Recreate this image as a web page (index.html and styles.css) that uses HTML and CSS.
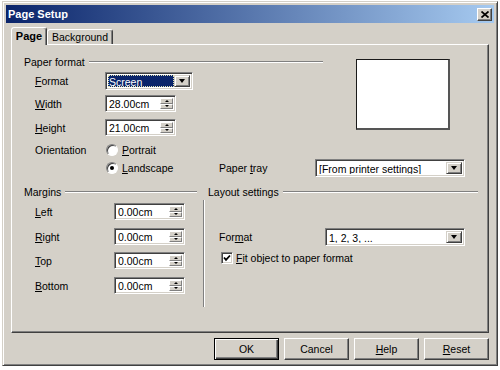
FILE: index.html
```html
<!DOCTYPE html>
<html>
<head>
<meta charset="utf-8">
<title>Page Setup</title>
<link rel="stylesheet" href="styles.css">
</head>
<body>
<div class="window">
  <div class="titlebar">
    <span class="title">Page Setup</span>
    <span class="close"><svg width="8" height="7" viewBox="0 0 8 7"><path d="M0.5 0.5 L7.5 6.5 M7.5 0.5 L0.5 6.5" stroke="#000" stroke-width="1.7" fill="none"/></svg></span>
  </div>
  <div class="tabs">
    <div class="tab tab-page">Page</div>
    <div class="tab tab-bg">Background</div>
  </div>
  <div class="panel">
    <div class="top">
      <div class="paper">
        <div class="ghead"><span>Paper format</span><i class="line"></i></div>
        <div class="row row-format">
          <span class="lab lab-70"><u>F</u>ormat</span>
          <div class="combo combo-screen">
            <div class="ctext focus">Screen</div>
            <div class="dbtn"><i class="darrow"></i></div>
          </div>
        </div>
        <div class="row row-width">
          <span class="lab lab-70"><u>W</u>idth</span>
          <div class="spin">
            <div class="stext">28.00cm</div>
            <div class="sbtns"><div class="sb"><i class="up"></i></div><div class="sb"><i class="dn"></i></div></div>
          </div>
        </div>
        <div class="row row-height">
          <span class="lab lab-70"><u>H</u>eight</span>
          <div class="spin">
            <div class="stext">21.00cm</div>
            <div class="sbtns"><div class="sb"><i class="up"></i></div><div class="sb"><i class="dn"></i></div></div>
          </div>
        </div>
        <div class="row row-portrait">
          <span class="lab lab-70">Orientation</span>
          <span class="radio"></span><span class="lab"><u>P</u>ortrait</span>
        </div>
      </div>
      <div class="preview"></div>
    </div>
    <div class="row row-landscape">
      <span class="lab-70"></span>
      <div class="landscape"><span class="radio on"></span><span class="lab"><u>L</u>andscape</span></div>
      <span class="lab lab-tray">Paper <u>t</u>ray</span>
      <div class="combo combo-tray">
        <div class="ctext">[From printer settings]</div>
        <div class="dbtn"><i class="darrow"></i></div>
      </div>
    </div>
    <div class="bottom">
      <div class="margins">
        <div class="ghead"><span>Margins</span><i class="line"></i></div>
        <div class="row mrow mrow-1">
          <span class="lab lab-79"><u>L</u>eft</span>
          <div class="spin"><div class="stext">0.00cm</div><div class="sbtns"><div class="sb"><i class="up"></i></div><div class="sb"><i class="dn"></i></div></div></div>
        </div>
        <div class="row mrow mrow-2">
          <span class="lab lab-79"><u>R</u>ight</span>
          <div class="spin"><div class="stext">0.00cm</div><div class="sbtns"><div class="sb"><i class="up"></i></div><div class="sb"><i class="dn"></i></div></div></div>
        </div>
        <div class="row mrow mrow-3">
          <span class="lab lab-79"><u>T</u>op</span>
          <div class="spin"><div class="stext">0.00cm</div><div class="sbtns"><div class="sb"><i class="up"></i></div><div class="sb"><i class="dn"></i></div></div></div>
        </div>
        <div class="row mrow mrow-4">
          <span class="lab lab-79"><u>B</u>ottom</span>
          <div class="spin"><div class="stext">0.00cm</div><div class="sbtns"><div class="sb"><i class="up"></i></div><div class="sb"><i class="dn"></i></div></div></div>
        </div>
      </div>
      <div class="layout">
        <div class="ghead"><span>Layout settings</span><i class="line"></i></div>
        <div class="lbody">
          <div class="lrow">
            <span class="lab lab-106">For<u>m</u>at</span>
            <div class="combo combo-num">
              <div class="ctext">1, 2, 3, ...</div>
              <div class="dbtn"><i class="darrow"></i></div>
            </div>
          </div>
          <div class="lrow lrow-check">
            <span class="check"><svg width="8" height="8" viewBox="0 0 8 8"><path d="M1 3.5 L3 5.8 L7 1.5" stroke="#000" stroke-width="1.8" fill="none"/></svg></span>
            <span class="lab"><u>F</u>it object to paper format</span>
          </div>
        </div>
      </div>
    </div>
  </div>
  <div class="btns">
    <div class="btn btn-default">OK</div>
    <div class="btn">Cancel</div>
    <div class="btn"><u>H</u>elp</div>
    <div class="btn"><u>R</u>eset</div>
  </div>
</div>
</body>
</html>
```
FILE: styles.css
```css
* { box-sizing: border-box; }

body {
  margin: 0;
  background: #ffffff;
  font-family: "Liberation Sans", Arial, sans-serif;
  font-size: 10.5px;
  color: #000;
}

.window {
  width: 496px;
  height: 365px;
  margin: 1px 0 0 2px;
  background: #d4d0c8;
  border: 1px solid;
  border-color: #d4d0c8 #404040 #404040 #d4d0c8;
  box-shadow: inset 1px 1px #ffffff, inset -1px -1px #808080;
  padding: 3px;
  display: flex;
  flex-direction: column;
}

.titlebar {
  height: 18px;
  display: flex;
  align-items: center;
  justify-content: space-between;
  padding: 0 2px;
  background: linear-gradient(to right, #0a246a, #a6caf0);
}

.title {
  color: #fff;
  font-weight: bold;
  font-size: 11px;
}

.close {
  width: 15px;
  height: 13px;
  background: #d4d0c8;
  border: 1px solid;
  border-color: #fff #404040 #404040 #fff;
  box-shadow: inset -1px -1px #808080;
  display: flex;
  align-items: center;
  justify-content: center;
}

.tabs {
  height: 21px;
  display: flex;
  align-items: flex-end;
  padding-left: 5px;
}

.tab {
  height: 15px;
  border: 1px solid;
  border-bottom: 0;
  border-color: #fff #404040 transparent #fff;
  box-shadow: inset -1px 0 #808080;
  border-radius: 3px 3px 0 0;
  display: flex;
  align-items: center;
  justify-content: center;
  background: #d4d0c8;
}

.tab-page {
  width: 36px;
  height: 18px;
  margin-bottom: -1px;
  position: relative;
  z-index: 1;
  font-weight: bold;
  font-size: 11px;
  padding-bottom: 2px;
}

.tab-bg {
  width: 66px;
}

.panel {
  height: 289px;
  margin: 0 5px;
  border: 1px solid;
  border-color: #fff #404040 #404040 #fff;
  box-shadow: inset -1px -1px #808080;
  padding: 10px 0 0 12px;
}

.top {
  display: flex;
  align-items: flex-start;
}

.paper { width: 299px; }

.ghead {
  height: 14px;
  display: flex;
  align-items: center;
  white-space: nowrap;
}

.ghead .line {
  flex: 1;
  height: 2px;
  border-top: 1px solid #808080;
  border-bottom: 1px solid #fff;
  margin-left: 4px;
}

.row {
  display: flex;
  align-items: center;
  padding-left: 11px;
}

.lab { white-space: nowrap; }
.lab-70 { width: 70px; flex: none; }
.lab-79 { width: 79px; flex: none; }
.lab-106 { width: 106px; flex: none; }
.lab-tray { width: 96px; flex: none; }

.row-format { height: 18px; margin-top: 3px; }
.row-width { height: 17px; margin-top: 5px; }
.row-height { height: 17px; margin-top: 7px; }
.row-portrait { height: 14px; margin-top: 7px; }
.row-landscape { height: 18px; margin-top: 2px; }

.landscape {
  width: 114px;
  display: flex;
  align-items: center;
}

.preview {
  width: 94px;
  height: 71px;
  margin: 4px 0 0 33px;
  background: #fff;
  border: 1px solid #1a1a1a;
  border-right: 2px solid #555;
  border-bottom: 2px solid #555;
}

.sunken {
  border: 1px solid;
}

.combo, .spin {
  display: flex;
  background: #fff;
  border: 1px solid;
  border-color: #808080 #fff #fff #808080;
  box-shadow: inset 1px 1px #404040, inset -1px -1px #d4d0c8;
  padding: 2px;
}

.combo { height: 18px; }
.combo-screen { width: 88px; }
.combo-tray { width: 150px; }
.combo-num { width: 140px; }

.ctext {
  flex: 1;
  padding-left: 1px;
  line-height: 14px;
  white-space: nowrap;
  overflow: hidden;
}

.ctext.focus {
  background: #0a246a;
  color: #fff;
  outline: 1px dotted #e0e0b0;
  outline-offset: -1px;
}

.dbtn {
  width: 16px;
  flex: none;
  background: #d4d0c8;
  border: 1px solid;
  border-color: #d4d0c8 #404040 #404040 #d4d0c8;
  box-shadow: inset 1px 1px #fff, inset -1px -1px #808080;
  display: flex;
  align-items: center;
  justify-content: center;
}

.darrow {
  width: 0;
  height: 0;
  border-left: 3.5px solid transparent;
  border-right: 3.5px solid transparent;
  border-top: 4px solid #000;
}

.spin {
  width: 71px;
  height: 17px;
}

.stext {
  flex: 1;
  padding-left: 1px;
  line-height: 13px;
  white-space: nowrap;
}

.sbtns {
  width: 13px;
  flex: none;
  display: flex;
  flex-direction: column;
}

.sb {
  flex: 1;
  background: #d4d0c8;
  border: 1px solid;
  border-color: #fff #808080 #808080 #fff;
  display: flex;
  align-items: center;
  justify-content: center;
}

.up, .dn {
  width: 0;
  height: 0;
  border-left: 2px solid transparent;
  border-right: 2px solid transparent;
}

.up { border-bottom: 2px solid #000; }
.dn { border-top: 2px solid #000; }

.radio {
  width: 12px;
  height: 12px;
  flex: none;
  border-radius: 50%;
  background: #fff;
  border: 1px solid;
  border-color: #808080 #fff #fff #808080;
  box-shadow: inset 1px 1px #404040;
  margin: 0 4px 0 1px;
  display: flex;
  align-items: center;
  justify-content: center;
}

.radio.on::after {
  content: "";
  width: 4px;
  height: 4px;
  border-radius: 50%;
  background: #000;
}

.bottom {
  display: flex;
  margin-top: 8px;
}

.margins { width: 173px; }

.mrow { height: 17px; }
.mrow-1 { margin-top: 4px; }
.mrow-2 { margin-top: 8px; }
.mrow-3 { margin-top: 7px; }
.mrow-4 { margin-top: 8px; }

.layout {
  width: 275px;
  margin-left: 6px;
}

.layout .ghead { margin-left: 5px; }

.lbody {
  margin-top: 1px;
  height: 107px;
  border-left: 1px solid #808080;
  box-shadow: inset 1px 0 #fff;
  padding: 28px 0 0 15px;
}

.lrow {
  display: flex;
  align-items: center;
  height: 17px;
}

.lrow-check {
  height: 12px;
  margin-top: 7px;
}

.check {
  width: 12px;
  height: 12px;
  flex: none;
  margin: 0 3px 0 2px;
  background: #fff;
  border: 1px solid;
  border-color: #808080 #fff #fff #808080;
  box-shadow: inset 1px 1px #404040, inset -1px -1px #d4d0c8;
  display: flex;
  align-items: center;
  justify-content: center;
}

.btns {
  display: flex;
  justify-content: flex-end;
  gap: 5px;
  margin-top: 5px;
  padding-right: 5px;
}

.btn {
  width: 65px;
  height: 22px;
  border: 1px solid;
  border-color: #fff #404040 #404040 #fff;
  box-shadow: inset -1px -1px #808080;
  display: flex;
  align-items: center;
  justify-content: center;
}

.btn-default {
  border-color: #000;
  box-shadow: inset 1px 1px #fff, inset -1px -1px #404040, inset -2px -2px #808080;
}
```
